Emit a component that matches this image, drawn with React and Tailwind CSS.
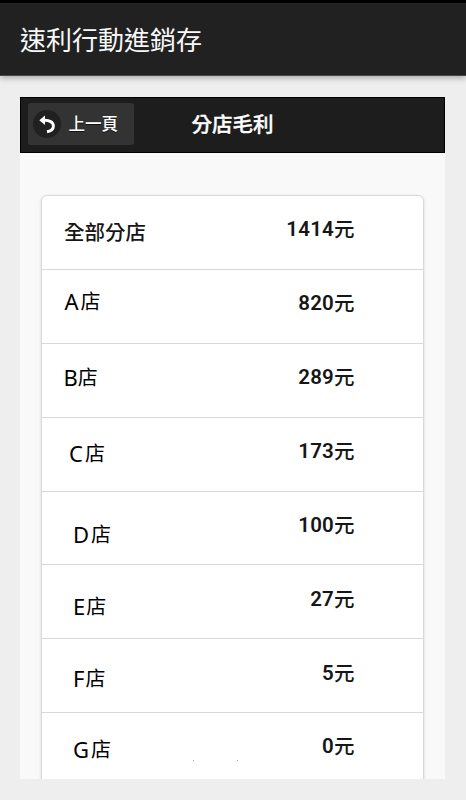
const rows = [
  { letter: "", name: "全部分店", amount: "1414", height: "h-[73px]", label: "ml-[22px] mt-[19px]", value: "mt-[18px]" },
  { letter: "A", name: "店", amount: "820", height: "h-[74px]", label: "ml-[22.5px] mt-[17px]", gap: "mr-[2px]", value: "mt-[18px]" },
  { letter: "B", name: "店", amount: "289", height: "h-[74px]", label: "ml-[21.5px] mt-[19px]", gap: "mr-0", value: "mt-[18px]" },
  { letter: "C", name: "店", amount: "173", height: "h-[74px]", label: "ml-[27px] mt-[21px]", gap: "mr-[2px]", value: "mt-[18px]" },
  { letter: "D", name: "店", amount: "100", height: "h-[73px]", label: "ml-[31px] mt-[28px]", gap: "mr-[2px]", value: "mt-[18px]" },
  { letter: "E", name: "店", amount: "27", height: "h-[74px]", label: "ml-[31px] mt-[27px]", gap: "mr-[1px]", value: "mt-[19px]" },
  { letter: "F", name: "店", amount: "5", height: "h-[74px]", label: "ml-[31px] mt-[25px]", gap: "mr-[1px]", value: "mt-[19px]" },
  { letter: "G", name: "店", amount: "0", height: "h-[67px]", label: "ml-[31px] mt-[22px]", gap: "mr-[2px]", value: "mt-[18px]" },
];

function BackIcon() {
  return (
    <span className="flex size-7 shrink-0 items-center justify-center rounded-full bg-[#202020]">
      <svg width="18" height="20" viewBox="0 0 18 20" fill="none">
        <path d="M5 6.4c6.5-.6 10.4 2 10.4 5.6 0 2.900-2.300 5-6.400 5.700" stroke="white" strokeWidth="2.9" />
        <path d="M1.3 6.2 7 1.5v9.6z" fill="white" />
      </svg>
    </span>
  );
}

function Row({ row, first, last }) {
  return (
    <li className={`flex items-start justify-between ${row.height} ${first ? "" : "border-t border-[#d7d7d7]"}`}>
      <span className={`flex items-center whitespace-nowrap leading-8 ${row.label}`}>
        {row.letter && (
          <span className={`-mt-[3px] font-['Noto_Sans','Noto_Sans_CJK_TC',sans-serif] text-[22px] text-black ${row.gap}`}>{row.letter}</span>
        )}
        <span className={row.letter ? "-mt-[2px] text-[20px] text-black" : "text-[20.5px] font-medium text-[#161616]"}>{row.name}</span>
      </span>
      {last && (
        <span className="mt-[47px] mr-[2px] flex gap-[43px]">
          <i className="size-px bg-[#aaaaaa]" />
          <i className="size-px bg-[#aaaaaa]" />
        </span>
      )}
      <span className={`mr-[68.5px] flex items-center whitespace-nowrap leading-[30px] font-medium text-[#161616] ${row.value}`}>
        <span className="font-[Roboto,sans-serif] text-[20.5px] font-semibold tracking-[0.2px]">{row.amount}</span>
        <span className="-mt-[2px] text-[20.5px]">元</span>
      </span>
    </li>
  );
}

export default function App() {
  return (
    <div className="flex h-[800px] w-[466px] flex-col overflow-hidden bg-[#eeeeee] font-['Noto_Sans_CJK_TC',sans-serif]">
      <header className="flex h-[76px] shrink-0 items-center border-t-[3px] border-b border-t-black border-b-[#494248] bg-[#212121] pl-5 shadow-[0_2px_6px_rgba(0,0,0,0.3)]">
        <h1 className="text-[26px] leading-9 text-[#f8f8f8]">速利行動進銷存</h1>
      </header>
      <main className="mt-[21px] ml-5 flex h-[682px] w-[425px] shrink-0 flex-col overflow-hidden bg-[#f9f9f9]">
        <div className="flex h-14 shrink-0 items-start border border-black bg-[#1d1d1d] pt-[5px] pl-[7px] text-white">
          <button className="flex h-[42px] w-[106px] items-center gap-[7.5px] rounded-[3px] bg-[#333333] pl-[5px] [text-shadow:0_1px_0_#111]">
            <BackIcon />
            <span className="-mt-[2px] text-[16.5px] leading-6 font-medium">上一頁</span>
          </button>
          <h2 className="mt-[4px] ml-[57.5px] text-[20.5px] leading-8 font-medium [-webkit-text-stroke:0.4px_white] [text-shadow:0_1px_0_#111]">分店毛利</h2>
        </div>
        <ul className="mx-[21px] mt-[42px] h-[600px] shrink-0 rounded-t-[6px] border border-[#d9d9d9] bg-white shadow-[0_1px_3px_rgba(0,0,0,0.15)]">
          {rows.map((row, i) => (
            <Row key={row.letter + row.name} row={row} first={i === 0} last={i === rows.length - 1} />
          ))}
        </ul>
      </main>
    </div>
  );
}
